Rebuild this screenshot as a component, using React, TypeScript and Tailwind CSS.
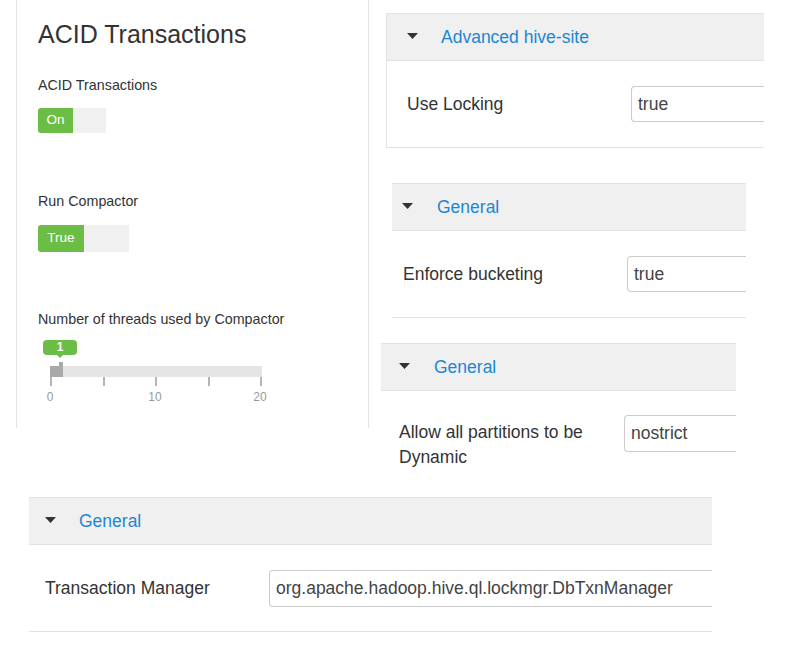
import React from "react";

function Caret({ className }: { className: string }) {
  return (
    <svg width="11" height="6" viewBox="0 0 11 6" className={className}>
      <path d="M0 0 L11 0 L5.5 6 Z" fill="#333" />
    </svg>
  );
}

function Toggle({ label, onW, offW, h }: { label: string; onW: string; offW: string; h: string }) {
  return (
    <div className={`flex ${h} rounded-[3px] overflow-hidden`}>
      <div className={`${onW} bg-[#6cbd45] text-white text-[13.5px] flex items-center justify-center`}>
        {label}
      </div>
      <div className={`${offW} bg-[#f0f0f0]`} />
    </div>
  );
}

function Slider() {
  return (
    <div className="mt-[11px]">
      <div className="relative ml-[12px] w-[212px] pt-[26px]">
        {/* tooltip */}
        <div className="absolute left-[-7px] top-0 w-[34px] h-[15px] rounded-[4px] bg-[#6cbd45] text-white text-[12px] font-bold leading-[15px] text-center">
          1
          <div className="absolute left-[14px] top-[15px] w-0 h-0 border-l-[3px] border-r-[3px] border-t-[3px] border-l-transparent border-r-transparent border-t-[#6cbd45]" />
        </div>
        <div className="relative h-[11px] bg-[#e5e5e5]">
          <div className="absolute left-0 top-0 h-[11px] w-[12px] bg-[#a9a9a9]" />
          <div className="absolute left-[9px] top-[-4px] h-[15px] w-[4px] bg-[#a9a9a9]" />
        </div>
        <div className="flex justify-between">
          <div className="w-[2px] h-[9px] bg-[#b5b5b5]" />
          <div className="w-[2px] h-[9px] bg-[#b5b5b5]" />
          <div className="w-[2px] h-[9px] bg-[#b5b5b5]" />
          <div className="w-[2px] h-[9px] bg-[#b5b5b5]" />
          <div className="w-[2px] h-[9px] bg-[#b5b5b5]" />
        </div>
      </div>
      <div className="ml-[2px] w-[230px] flex justify-between text-[12px] text-[#9a9a9a] leading-[16px] mt-[3px]">
        <span className="w-[20px] text-center">0</span>
        <span className="w-[20px] text-center">10</span>
        <span className="w-[20px] text-center">20</span>
      </div>
    </div>
  );
}

export default function App() {
  return (
    <div className="w-[785px] h-[659px] overflow-hidden bg-white text-[#333] font-['Liberation_Sans',Arial,sans-serif]">
      <div className="flex items-start h-[497px]">
        {/* left panel */}
        <div className="ml-[16px] w-[353px] h-[428px] shrink-0 border-x border-[#e3e3e3] pl-[21px] pt-[19px]">
          <h2 className="text-[25px] leading-[30px]">ACID Transactions</h2>
          <div className="mt-[26px] text-[14.3px] leading-[20px]">ACID Transactions</div>
          <div className="mt-[13px]">
            <Toggle label="On" onW="w-[35px]" offW="w-[33px]" h="h-[25px]" />
          </div>
          <div className="mt-[58px] text-[14.3px] leading-[20px]">Run Compactor</div>
          <div className="mt-[14px]">
            <Toggle label="True" onW="w-[46px]" offW="w-[45px]" h="h-[27px]" />
          </div>
          <div className="mt-[57px] text-[14.3px] leading-[20px]">Number of threads used by Compactor</div>
          <Slider />
        </div>

        {/* right column */}
        <div className="flex flex-col items-start shrink-0 text-[17.5px]">
          <div className="ml-[17px] mt-[13px] w-[378px] border-l border-t border-b border-[#e3e3e3]">
            <div className="h-[47px] bg-[#f0f0f0] border-b border-[#e3e3e3] flex items-center">
              <Caret className="ml-[20px] -mt-[2px]" />
              <span className="ml-[23px] text-[#1b87d4]">Advanced hive-site</span>
            </div>
            <div className="h-[86px] flex items-center">
              <span className="ml-[20px] w-[224px]">Use Locking</span>
              <div className="flex-1 h-[36px] border-l border-y border-[#ccc] rounded-l-[4px] pl-[6px] flex items-center text-[#444]">
                true
              </div>
            </div>
          </div>

          <div className="ml-[23px] mt-[35px] w-[354px] border-t border-b border-[#e3e3e3]">
            <div className="h-[47px] bg-[#f0f0f0] border-b border-[#e3e3e3] flex items-center">
              <Caret className="ml-[10px] -mt-[2px]" />
              <span className="ml-[24px] text-[#1b87d4]">General</span>
            </div>
            <div className="h-[86px] flex items-center">
              <span className="ml-[11px] w-[224px]">Enforce bucketing</span>
              <div className="flex-1 h-[36px] border-l border-y border-[#ccc] rounded-l-[4px] pl-[6px] flex items-center text-[#444]">
                true
              </div>
            </div>
          </div>

          <div className="ml-[12px] mt-[25px] w-[355px] border-t border-[#e3e3e3]">
            <div className="h-[47px] bg-[#f0f0f0] border-b border-[#e3e3e3] flex items-center">
              <Caret className="ml-[18px] -mt-[2px]" />
              <span className="ml-[24px] text-[#1b87d4]">General</span>
            </div>
            <div className="flex items-start pt-[24px]">
              <span className="ml-[18px] w-[225px] mt-[5px] leading-[25px]">
                Allow all partitions to be Dynamic
              </span>
              <div className="flex-1 h-[37px] border-l border-y border-[#ccc] rounded-l-[4px] pl-[6px] flex items-center text-[#444]">
                nostrict
              </div>
            </div>
          </div>
        </div>
      </div>

      {/* bottom panel */}
      <div className="ml-[29px] w-[683px] border-t border-b border-[#e3e3e3] text-[17.5px]">
        <div className="h-[47px] bg-[#f0f0f0] border-b border-[#e3e3e3] flex items-center">
          <Caret className="ml-[16px] -mt-[2px]" />
          <span className="ml-[23px] text-[#1b87d4]">General</span>
        </div>
        <div className="h-[86px] flex items-center">
          <span className="ml-[16px] w-[224px]">Transaction Manager</span>
          <div className="flex-1 h-[37px] border-l border-y border-[#ccc] rounded-l-[4px] pl-[6px] flex items-center text-[#444]">
            org.apache.hadoop.hive.ql.lockmgr.DbTxnManager
          </div>
        </div>
      </div>
    </div>
  );
}
